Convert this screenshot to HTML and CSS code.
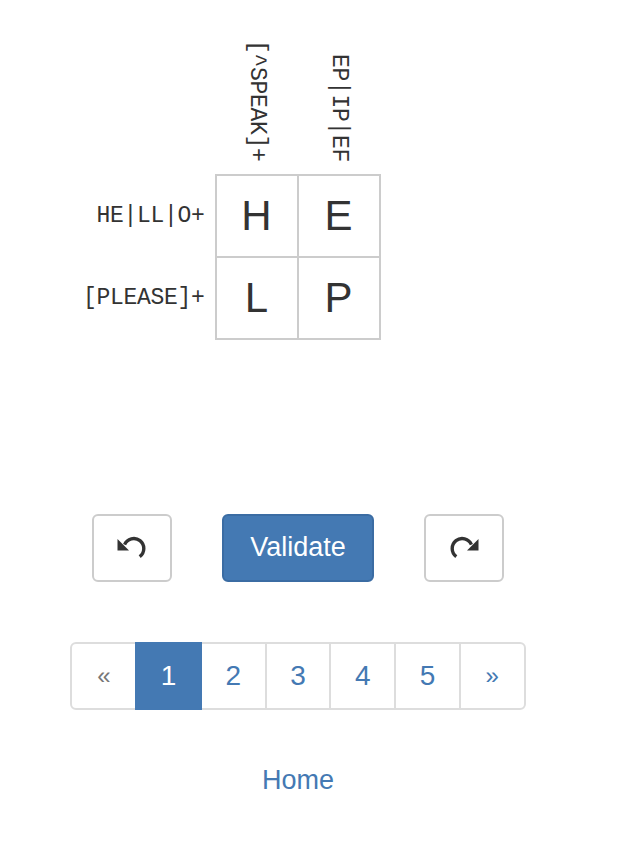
FILE: index.html
```html
<!DOCTYPE html>
<html lang="en">
<head>
<meta charset="utf-8">
<title>Regex Crossword</title>
<link rel="stylesheet" href="styles.css">
</head>
<body>
<div class="page">
  <table class="puzzle">
    <tr class="head-row">
      <th class="corner"></th>
      <th class="col-label"><span class="vtext">[^SPEAK]+</span></th>
      <th class="col-label"><span class="vtext">EP|IP|EF</span></th>
      <th class="mirror"></th>
    </tr>
    <tr>
      <th class="row-label">HE|LL|O+</th>
      <td class="cell">H</td>
      <td class="cell">E</td>
      <th class="mirror"></th>
    </tr>
    <tr>
      <th class="row-label">[PLEASE]+</th>
      <td class="cell">L</td>
      <td class="cell">P</td>
      <th class="mirror"></th>
    </tr>
  </table>

  <div class="actions">
    <button class="btn btn-icon" type="button" aria-label="Undo">
      <svg class="icon" viewBox="0 0 32 26" width="32" height="26">
        <path d="M8.6 9.6 A10 10 0 1 1 23.7 21.6" fill="none" stroke="#333" stroke-width="3.4"/>
        <polygon points="1.5,4 1.5,15.5 13,15.5" fill="#333"/>
      </svg>
    </button>
    <button class="btn btn-primary" type="button">Validate</button>
    <button class="btn btn-icon" type="button" aria-label="Redo">
      <svg class="icon" viewBox="0 0 32 26" width="32" height="26">
        <g transform="translate(32,0) scale(-1,1)">
          <path d="M8.6 9.6 A10 10 0 1 1 23.7 21.6" fill="none" stroke="#333" stroke-width="3.4"/>
          <polygon points="1.5,4 1.5,15.5 13,15.5" fill="#333"/>
        </g>
      </svg>
    </button>
  </div>

  <ul class="pagination">
    <li><a class="page-link arrow first" href="#">&laquo;</a></li>
    <li><a class="page-link active" href="#">1</a></li>
    <li><a class="page-link" href="#">2</a></li>
    <li><a class="page-link" href="#">3</a></li>
    <li><a class="page-link" href="#">4</a></li>
    <li><a class="page-link" href="#">5</a></li>
    <li><a class="page-link arrow-next last" href="#">&raquo;</a></li>
  </ul>

  <div class="home"><a href="#">Home</a></div>
</div>
</body>
</html>
```
FILE: styles.css
```css
html, body {
  margin: 0;
  padding: 0;
  background: #fff;
}

body {
  font-family: "Liberation Sans", Arial, sans-serif;
  color: #333;
}

.page {
  width: 580px;
  margin-left: 8px;
  padding-top: 40px;
  display: flex;
  flex-direction: column;
  align-items: center;
}

.puzzle {
  border-collapse: collapse;
  border-spacing: 0;
}

.puzzle th {
  font-family: "Liberation Mono", "DejaVu Sans Mono", monospace;
  font-weight: normal;
  font-size: 23px;
  letter-spacing: -0.3px;
  color: #333;
  padding: 0;
}

.corner, .mirror {
  width: 140px;
}

.col-label {
  vertical-align: bottom;
  padding-bottom: 12px !important;
}

.vtext {
  display: block;
  width: 26px;
  margin: 0 auto;
  writing-mode: vertical-rl;
  line-height: 26px;
  white-space: nowrap;
}

.row-label {
  text-align: right;
  padding-right: 10px !important;
  white-space: nowrap;
  vertical-align: middle;
}

.cell {
  width: 80px;
  height: 80px;
  padding: 0;
  border: 2px solid #cccccc;
  text-align: center;
  vertical-align: middle;
  font-size: 42px;
  color: #333;
  font-family: "Liberation Sans", Arial, sans-serif;
}

.actions {
  margin-top: 174px;
  display: flex;
  gap: 50px;
}

.btn {
  box-sizing: border-box;
  height: 68px;
  border-radius: 6px;
  border: 2px solid #cccccc;
  background: #fff;
  font-family: "Liberation Sans", Arial, sans-serif;
  padding: 0;
  margin: 0;
  display: flex;
  align-items: center;
  justify-content: center;
}

.btn-icon {
  width: 80px;
}

.icon {
  display: block;
}

.btn-primary {
  width: 152px;
  background: #4479b3;
  border-color: #3b6ca3;
  color: #fff;
  font-size: 27px;
}

.pagination {
  list-style: none;
  margin: 60px 0 0 0;
  padding: 0;
  display: flex;
}

.pagination li {
  margin-left: -2px;
}

.pagination li:first-child {
  margin-left: 0;
}

.page-link {
  box-sizing: border-box;
  width: 66.72px;
  height: 68px;
  display: flex;
  align-items: center;
  justify-content: center;
  border: 2px solid #dddddd;
  background: #fff;
  color: #4479b3;
  font-size: 28px;
  text-decoration: none;
  position: relative;
}

.page-link.first {
  border-radius: 6px 0 0 6px;
}

.page-link.last {
  border-radius: 0 6px 6px 0;
}

.page-link.arrow {
  color: #777;
  font-size: 24px;
}

.page-link.arrow-next {
  font-size: 24px;
}

.page-link.active {
  background: #4479b3;
  border-color: #4479b3;
  color: #fff;
  z-index: 1;
}

.home {
  margin-top: 54px;
  font-size: 27px;
  line-height: 32px;
}

.home a {
  color: #4479b3;
  text-decoration: none;
}
```
